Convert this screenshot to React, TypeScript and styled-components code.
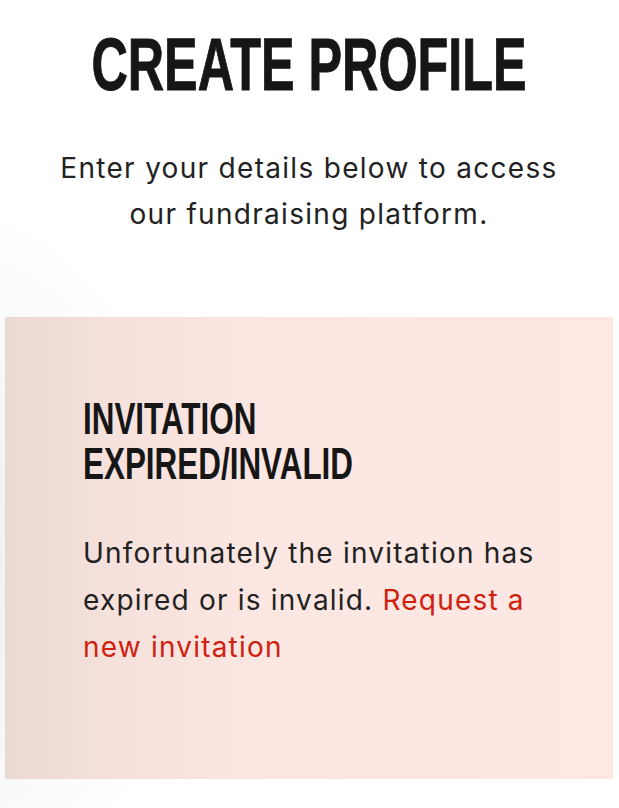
import React from 'react';
import styled, { createGlobalStyle } from 'styled-components';

const GlobalStyle = createGlobalStyle`
  html, body {
    margin: 0;
    padding: 0;
    background: #ffffff;
  }
  * {
    box-sizing: border-box;
  }
`;

const Page = styled.main`
  width: 619px;
  min-height: 808px;
  padding: 28px 6px 0 5px;
  display: flex;
  flex-direction: column;
  align-items: stretch;
  background:
    radial-gradient(ellipse 360px 520px at -60px 560px, rgba(0, 0, 0, 0.07), rgba(0, 0, 0, 0) 70%),
    #ffffff;
  font-family: Inter, 'Liberation Sans', sans-serif;
`;

const Header = styled.header`
  display: flex;
  flex-direction: column;
  align-items: center;
`;

const Title = styled.h1`
  margin: 0;
  font-family: 'Liberation Sans', Arial, sans-serif;
  font-weight: 700;
  font-size: 74px;
  line-height: 74px;
  color: #161616;
  white-space: nowrap;
  transform: scaleX(0.68);
  -webkit-text-stroke: 1px #161616;
`;

const Intro = styled.p`
  margin: 43px 0 0;
  max-width: 530px;
  text-align: center;
  font-size: 28px;
  line-height: 46px;
  letter-spacing: 1.3px;
  color: #222222;
`;

const Card = styled.section`
  margin-top: 80px;
  padding: 79px 55px 108px 78px;
  background: linear-gradient(90deg, #ead8d3 0%, #f6e1dc 18%, #fce7e2 45%, #fee8e3 100%);
`;

const CardTitle = styled.h2`
  margin: 0;
  font-family: 'Liberation Sans', Arial, sans-serif;
  font-weight: 700;
  font-size: 44px;
  line-height: 45px;
  color: #161616;
  transform: scaleX(0.714);
  transform-origin: left center;
  white-space: nowrap;
`;

const Message = styled.p`
  margin: 44px 0 0;
  font-size: 28px;
  line-height: 47px;
  letter-spacing: 1.2px;
  color: #222222;
`;

const Link = styled.a`
  color: #d0200e;
  text-decoration: none;
`;

export default function App() {
  return (
    <>
      <GlobalStyle />
      <Page>
        <Header>
          <Title>CREATE PROFILE</Title>
          <Intro>Enter your details below to access our fundraising platform.</Intro>
        </Header>
        <Card>
          <CardTitle>
            INVITATION
            <br />
            EXPIRED/INVALID
          </CardTitle>
          <Message>
            Unfortunately the invitation has expired or is invalid.{' '}
            <Link href="#">Request a new invitation</Link>
          </Message>
        </Card>
      </Page>
    </>
  );
}
